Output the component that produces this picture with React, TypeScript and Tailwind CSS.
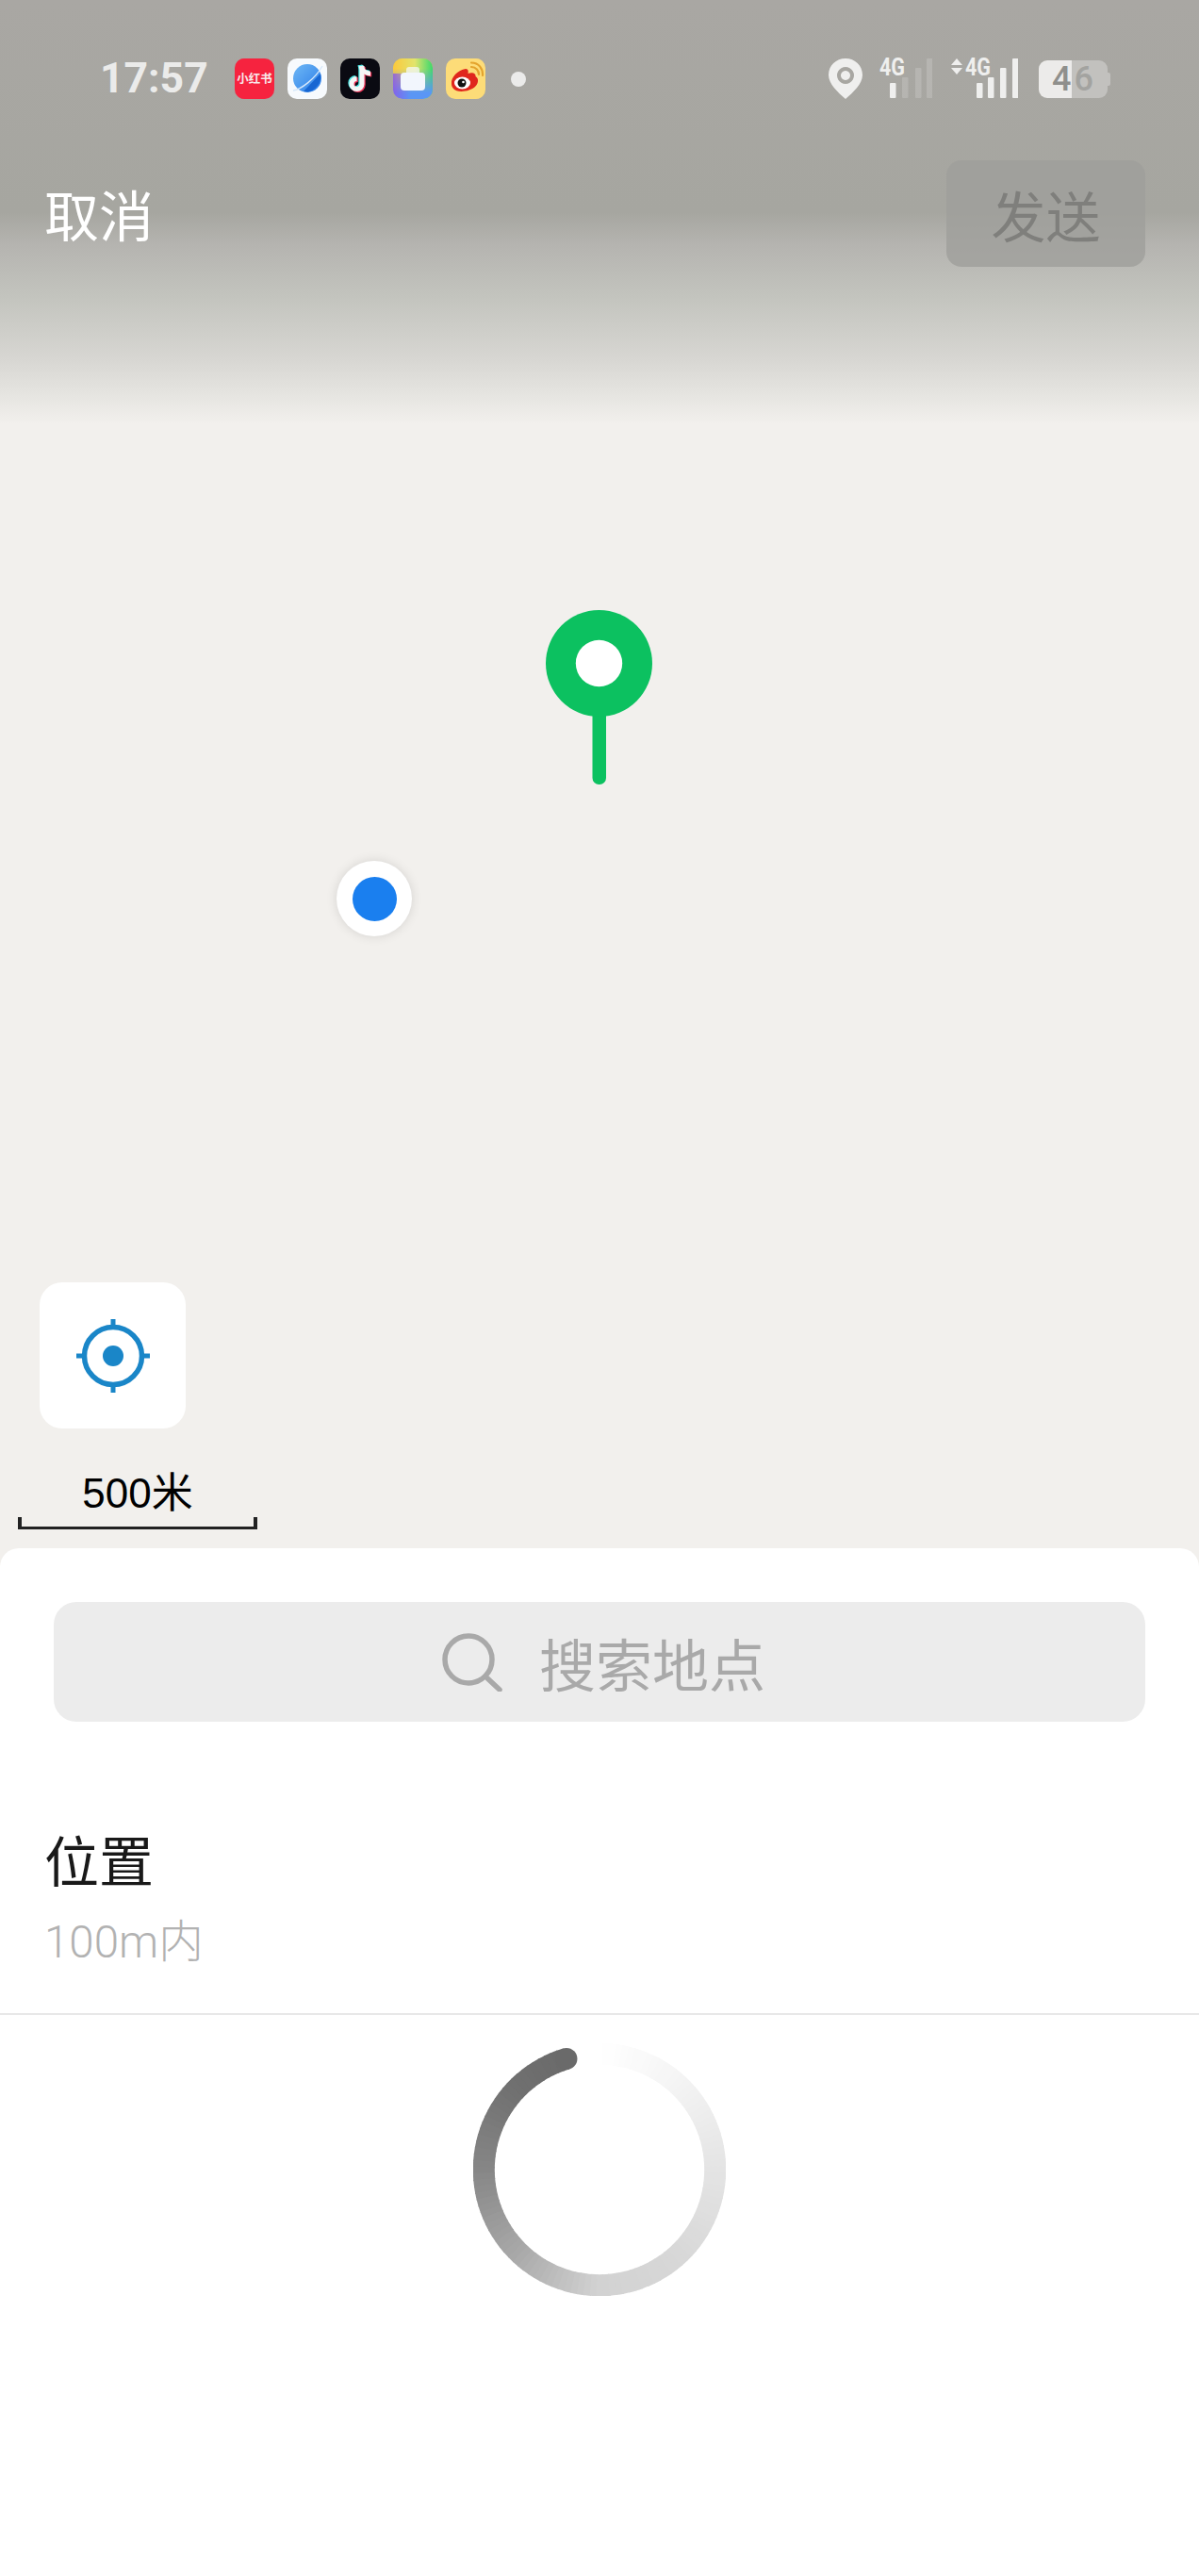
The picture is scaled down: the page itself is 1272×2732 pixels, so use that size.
import React from "react";

const cjk = "font-['Noto_Sans_CJK_SC','Noto_Sans',sans-serif]";

function AppIcon({ className, children }: { className: string; children?: React.ReactNode }) {
  return (
    <div className={`flex h-[43px] w-[42px] items-center justify-center overflow-hidden rounded-[10px] ${className}`}>
      {children}
    </div>
  );
}

function Planet() {
  return (
    <svg viewBox="0 0 42 43" className="h-full w-full">
      <defs>
        <linearGradient id="pl" x1="0" y1="0" x2="1" y2="1">
          <stop offset="0" stopColor="#6fb8f5" />
          <stop offset="1" stopColor="#2a7ce8" />
        </linearGradient>
      </defs>
      <circle cx="21" cy="21" r="15" fill="url(#pl)" />
      <path d="M17 35 L35 16 C37 26 29 34 22 35.5 Z" fill="#1766d2" />
      <path d="M6 34 C14 33 29 22 37 8" stroke="#d6e8fa" strokeWidth="1.4" fill="none" />
    </svg>
  );
}

function Note() {
  const d = "M23 8 v19 a5.5 5.5 0 1 1 -5.5 -5.5";
  const t = "M22 8 C23 13 27 16 32 16";
  return (
    <svg viewBox="0 0 42 43" className="h-full w-full">
      <g fill="none" strokeWidth="5">
        <path d={d} stroke="#4de8e6" transform="translate(-1.2 -1)" />
        <path d={t} stroke="#4de8e6" transform="translate(-1.2 -1)" />
        <path d={d} stroke="#f0355a" transform="translate(1.2 1)" />
        <path d={t} stroke="#f0355a" transform="translate(1.2 1)" />
        <path d={d} stroke="#f5f5f5" />
        <path d={t} stroke="#f5f5f5" />
      </g>
    </svg>
  );
}

function Home() {
  return (
    <svg viewBox="0 0 42 43" className="h-full w-full">
      <defs>
        <linearGradient id="h1" x1="0" y1="0" x2="1" y2="0">
          <stop offset="0" stopColor="#fbc93c" />
          <stop offset="0.55" stopColor="#e2e46c" />
          <stop offset="1" stopColor="#3bd86c" />
        </linearGradient>
        <linearGradient id="h2" x1="0" y1="0" x2="0" y2="1">
          <stop offset="0.25" stopColor="#5a96f5" stopOpacity="0" />
          <stop offset="0.85" stopColor="#5a96f5" />
        </linearGradient>
        <linearGradient id="h3" x1="0" y1="0" x2="1" y2="0">
          <stop offset="0" stopColor="#8a5ae8" stopOpacity="0.85" />
          <stop offset="0.45" stopColor="#8a5ae8" stopOpacity="0" />
        </linearGradient>
      </defs>
      <rect width="42" height="43" fill="url(#h1)" />
      <rect width="42" height="43" fill="url(#h2)" />
      <rect y="16" width="42" height="27" fill="url(#h3)" />
      <path d="M14 12 a3 3 0 0 1 3 -3 h8 a3 3 0 0 1 3 3 v5 H14 Z" fill="#f4f8f4" opacity="0.75" />
      <rect x="8" y="15" width="26" height="19" rx="4" fill="#f2f6fd" />
    </svg>
  );
}

function Weibo() {
  return (
    <svg viewBox="0 0 42 43" className="h-full w-full">
      <path d="M6 27 C5 20 13 12 21 11 C24 11 24 14 23.5 16 C27 14.5 32 15 31.5 19 C35 21 35 26 31 30 C26 35 12 37 8 32 C7 31 6 29 6 27 Z" fill="#e0261d" />
      <ellipse cx="17.5" cy="26" rx="8.5" ry="6.5" fill="#fff" />
      <circle cx="17" cy="26" r="4.5" fill="#111" />
      <circle cx="18.5" cy="25" r="1.3" fill="#fff" />
      <path d="M27 9 C32 9 35 13 35 17" stroke="#e3a32d" strokeWidth="2.2" fill="none" strokeLinecap="round" />
      <path d="M27 4.5 C35 4.5 39.5 11 39 18" stroke="#e3a32d" strokeWidth="2.2" fill="none" strokeLinecap="round" />
    </svg>
  );
}

function PinSmall() {
  return (
    <svg viewBox="0 0 36 43" className="h-[43px] w-[36px]">
      <path fillRule="evenodd" fill="#efefee" d="M18 0 C28 0 36 7.5 36 17.5 C36 27 26 36 18 43 C10 36 0 27 0 17.5 C0 7.5 8 0 18 0 Z M18 9 a9 9 0 1 0 0.01 0 Z M18 13 a5 5 0 1 1 -0.01 0 Z" />
    </svg>
  );
}

function Signal({ level, arrows }: { level: number; arrows?: boolean }) {
  const bars = [
    { x: arrows ? 27 : 11, h: 16 },
    { x: arrows ? 39 : 24, h: 22 },
    { x: arrows ? 52 : 38, h: 32 },
    { x: arrows ? 65 : 50, h: 42 },
  ];
  const w = arrows ? 71 : 56;
  return (
    <svg width={w} height="53" viewBox={`0 -10 ${w} 53`} className="-mt-[10px]">
      {arrows && (
        <g fill="#efefee">
          <path d="M0 7 L6 0 L12 7 Z" />
          <path d="M0 10 L12 10 L6 17 Z" />
        </g>
      )}
      <text x={arrows ? 15 : 0} y="18" fontFamily="Roboto, sans-serif" fontWeight="700" fontSize="25" fill="#efefee" textLength="27" lengthAdjust="spacingAndGlyphs">
        4G
      </text>
      {bars.map((b, i) => (
        <rect key={i} x={b.x} y={42 - b.h} width="6.5" height={b.h} rx="1" fill="#efefee" opacity={i < level ? 1 : 0.2} />
      ))}
    </svg>
  );
}

function Battery() {
  return (
    <div className="relative h-[40px] w-[76px] font-['Roboto',sans-serif]">
      <div className="absolute left-0 top-0 flex h-full w-[73px] overflow-hidden rounded-[9px]">
        <div className="w-[35px] bg-[#ecebea]" />
        <div className="flex-1 bg-[#c2c1be]" />
      </div>
      <div className="absolute right-0 top-[13px] h-[14px] w-[3px] rounded-r-[2px] bg-[#c2c1be]" />
      <div className="absolute left-[12px] top-0 flex h-full w-[48px] items-center justify-center gap-[3px] text-[36px] font-medium leading-none">
        <span className="text-[#8f8f8c]">4</span>
        <span className="text-[#a3a3a0]">6</span>
      </div>
    </div>
  );
}

function GreenPin() {
  return (
    <svg viewBox="0 0 113 185" className="h-[185px] w-[113px]">
      <rect x="49.5" y="100" width="14.5" height="85" rx="7" fill="#0cc160" />
      <circle cx="56.5" cy="56.5" r="56.5" fill="#0cc160" />
      <circle cx="56.5" cy="56.5" r="24.7" fill="#fff" />
    </svg>
  );
}

function Locate() {
  return (
    <svg viewBox="0 0 78 78" className="h-[78px] w-[78px]">
      <circle cx="39" cy="39" r="30.5" fill="none" stroke="#1a86c8" strokeWidth="5.5" />
      <circle cx="39" cy="39" r="11" fill="#1a86c8" />
      <g fill="#1a86c8">
        <rect x="36.5" y="0" width="5" height="9" />
        <rect x="36.5" y="69" width="5" height="9" />
        <rect x="0" y="36.5" width="9" height="5" />
        <rect x="69" y="36.5" width="9" height="5" />
      </g>
    </svg>
  );
}

const stops: [number, number][] = [
  [0, 0x6a], [30, 0x70], [73, 0x86], [118, 0xa8], [163, 0xd2], [208, 0xd8], [253, 0xe4], [298, 0xf3], [343, 0xff],
];

function shade(t: number) {
  for (let i = 0; i < stops.length - 1; i++) {
    const [a, ca] = stops[i];
    const [b, cb] = stops[i + 1];
    if (t <= b) {
      const v = Math.round(ca + ((cb - ca) * (t - a)) / (b - a));
      return `rgb(${v},${v},${v})`;
    }
  }
  return "rgb(255,255,255)";
}

function Spinner() {
  const R = 122.7;
  const c = 134;
  const head = -16.6;
  const pt = (deg: number) => {
    const r = (deg * Math.PI) / 180;
    return [c + R * Math.sin(r), c - R * Math.cos(r)];
  };
  const segs = [];
  for (let t = 0; t < 343; t += 3) {
    const [x1, y1] = pt(head - t);
    const [x2, y2] = pt(head - t - 3.6);
    segs.push(
      <path key={t} d={`M${x1} ${y1} A${R} ${R} 0 0 0 ${x2} ${y2}`} stroke={shade(t + 1.5)} strokeWidth="23" fill="none" />
    );
  }
  const [hx, hy] = pt(head);
  return (
    <svg viewBox="0 0 268 268" className="h-[268px] w-[268px]">
      {segs}
      <circle cx={hx} cy={hy} r="11.5" fill="#6a6a6a" />
    </svg>
  );
}

export default function App() {
  return (
    <div className={`flex h-[2732px] w-[1272px] flex-col overflow-hidden bg-white ${cjk}`}>
      <div className="relative flex h-[1662px] flex-col bg-[linear-gradient(180deg,#a9a7a3_0px,#a6a6a0_225px,#b5b4b0_260px,#c3c4be_315px,#d7d6d2_380px,#e6e5e1_420px,#f2f0ed_450px)]">
        <div className="flex items-start justify-between pl-[106px] pr-[94px] pt-[62px]">
          <div className="flex items-center">
            <span className="w-[114px] font-['Roboto',sans-serif] text-[44.5px] font-bold leading-[43px] text-[#ebebea]">17:57</span>
            <div className="ml-[29px] flex gap-[14px]">
              <AppIcon className="bg-[#f6233f]">
                <span className="whitespace-nowrap text-[12.5px] font-bold leading-none text-[#f8e8ea]">小红书</span>
              </AppIcon>
              <AppIcon className="bg-[#f7fafd]"><Planet /></AppIcon>
              <AppIcon className="bg-[#0a0a12]"><Note /></AppIcon>
              <AppIcon className="bg-[#e0c850]"><Home /></AppIcon>
              <AppIcon className="bg-[#fddc78]"><Weibo /></AppIcon>
            </div>
            <div className="ml-[27px] h-[16px] w-[16px] rounded-full bg-[#ebebea]" />
          </div>
          <div className="flex items-start">
            <PinSmall />
            <div className="ml-[18px]"><Signal level={1} /></div>
            <div className="ml-[20px]"><Signal level={4} arrows /></div>
            <div className="ml-[22px] mt-[2px]"><Battery /></div>
          </div>
        </div>

        <div className="mt-[65px] flex items-center justify-between pl-[47px] pr-[57px]">
          <span className="text-[58px] leading-[113px] text-white">取消</span>
          <div className="flex h-[113px] w-[211px] items-center justify-center rounded-[16px] bg-[#9f9f9b]/80">
            <span className="text-[58px] leading-none text-[#7f7f7c]">发送</span>
          </div>
        </div>

        <div className="absolute left-[579px] top-[647px]"><GreenPin /></div>
        <div className="absolute left-[357px] top-[913px] flex h-[80px] w-[80px] items-center justify-center rounded-full bg-white shadow-[0_0_12px_rgba(0,0,0,0.12)]">
          <div className="h-[47px] w-[47px] rounded-full bg-[#1a7fef]" />
        </div>

        <div className="mt-auto pb-[40px]">
          <div className="ml-[42px] flex h-[155px] w-[155px] items-center justify-center rounded-[24px] bg-white">
            <Locate />
          </div>
          <div className="ml-[19px] mt-[44px] w-[254px]">
            <div className="text-center text-[44px] leading-[50px] text-black font-['Liberation_Sans','Noto_Sans_CJK_SC',sans-serif]">500米</div>
            <div className="h-[13px] border-x-[4px] border-b-[3.5px] border-[#222]" />
          </div>
        </div>
      </div>

      <div className="relative -mt-[20px] flex flex-1 flex-col rounded-t-[20px] bg-white">
        <div className="mx-[57px] mt-[57px] flex h-[127px] items-center justify-center gap-[39px] rounded-[24px] bg-[#ececec] pl-[8px]">
          <svg viewBox="0 0 65 62" className="h-[62px] w-[65px]" fill="none" stroke="#a9a9a9" strokeWidth="5.5">
            <circle cx="29" cy="28" r="25" />
            <path d="M47 46 L62 60" strokeLinecap="round" />
          </svg>
          <span className="text-[60px] leading-none text-[#a9a9a9]">搜索地点</span>
        </div>

        <div className="h-[311px] border-b-2 border-[#e8e8e8] pl-[47px] pt-[105px]">
          <div className="text-[58px] leading-[80px] text-[#191919]">位置</div>
          <div className="mt-[19px] font-['Roboto','Noto_Sans_CJK_SC',sans-serif] text-[47.5px] font-light leading-[60px] text-[#b2b2b2]">100m内</div>
        </div>

        <div className="flex justify-center pt-[30px]">
          <Spinner />
        </div>
      </div>
    </div>
  );
}
